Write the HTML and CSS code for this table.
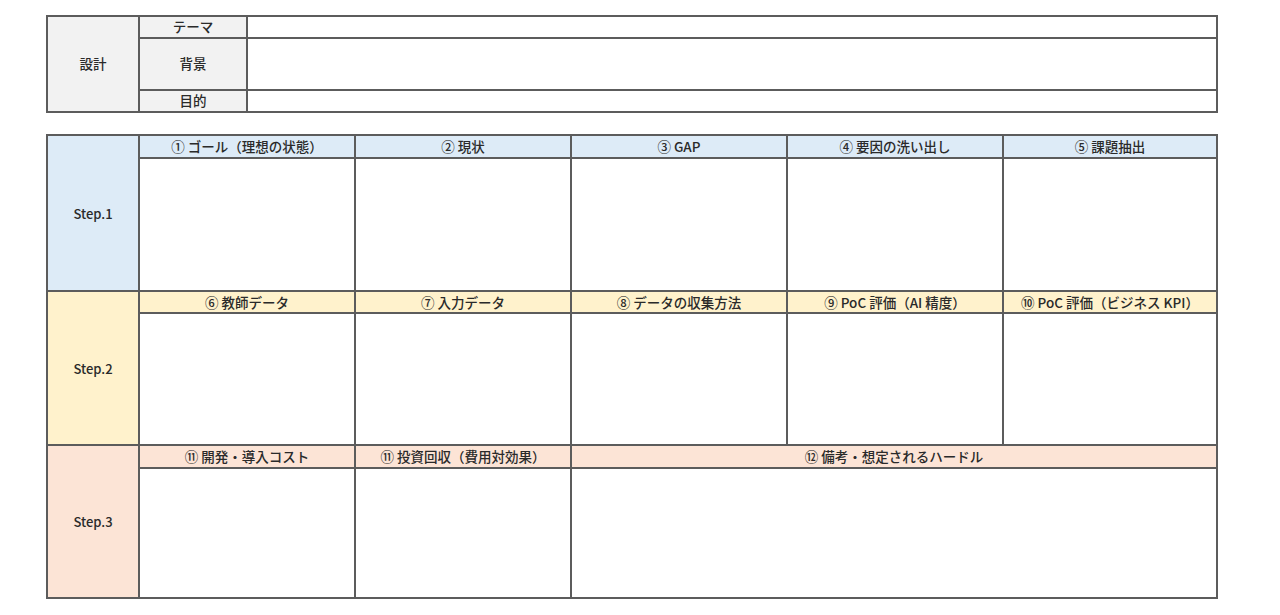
FILE: index.html
```html
<!DOCTYPE html>
<html lang="ja">
<head>
<meta charset="utf-8">
<link rel="stylesheet" href="styles.css">
</head>
<body>
<div class="page">
  <div class="design">
    <div class="cell label design-title">設計</div>
    <div class="cell label">テーマ</div>
    <div class="cell blank"></div>
    <div class="cell label">背景</div>
    <div class="cell blank"></div>
    <div class="cell label">目的</div>
    <div class="cell blank"></div>
  </div>

  <div class="canvas">
    <div class="cell step s1 r1">Step.1</div>
    <div class="cell head s1">①&nbsp;ゴール（理想の状態）</div>
    <div class="cell head s1">②&nbsp;現状</div>
    <div class="cell head s1">③&nbsp;GAP</div>
    <div class="cell head s1">④&nbsp;要因の洗い出し</div>
    <div class="cell head s1">⑤&nbsp;課題抽出</div>
    <div class="cell body"></div>
    <div class="cell body"></div>
    <div class="cell body"></div>
    <div class="cell body"></div>
    <div class="cell body"></div>

    <div class="cell step s2 r2">Step.2</div>
    <div class="cell head s2">⑥&nbsp;教師データ</div>
    <div class="cell head s2">⑦&nbsp;入力データ</div>
    <div class="cell head s2">⑧&nbsp;データの収集方法</div>
    <div class="cell head s2">⑨&nbsp;PoC 評価（AI 精度）</div>
    <div class="cell head s2">⑩&nbsp;PoC 評価（ビジネス KPI）</div>
    <div class="cell body"></div>
    <div class="cell body"></div>
    <div class="cell body"></div>
    <div class="cell body"></div>
    <div class="cell body"></div>

    <div class="cell step s3 r3">Step.3</div>
    <div class="cell head s3">⑪&nbsp;開発・導入コスト</div>
    <div class="cell head s3">⑪&nbsp;投資回収（費用対効果）</div>
    <div class="cell head s3 wide">⑫&nbsp;備考・想定されるハードル</div>
    <div class="cell body"></div>
    <div class="cell body"></div>
    <div class="cell body wide"></div>
  </div>
</div>
</body>
</html>
```

FILE: styles.css
```css
* { box-sizing: border-box; }
html, body { margin: 0; padding: 0; background: #ffffff; }
body {
  font-family: "Noto Sans CJK JP", "Noto Sans", sans-serif;
  color: #2a2a2a;
  font-size: 13.5px;
  font-weight: 500;
}
.page {
  padding: 15px 0 0 46px;
  width: 1280px;
  height: 615px;
}
.cell {
  display: flex;
  align-items: center;
  justify-content: center;
  background: #ffffff;
  line-height: 1;
  white-space: nowrap;
}
.design {
  display: grid;
  grid-template-columns: 90px 106px 968px;
  grid-template-rows: 20px 50px 20px;
  gap: 2px;
  background: #5c5c5c;
  border: 2px solid #5c5c5c;
  width: 1172px;
}
.design .label { background: #f2f2f2; }
.design-title { grid-row: 1 / 4; }

.canvas {
  margin-top: 21px;
  display: grid;
  grid-template-columns: 90px 214px 214px 214px 214px 212px;
  grid-template-rows: 21px 131px 20px 130px 21px 128px;
  gap: 2px;
  background: #5c5c5c;
  border: 2px solid #5c5c5c;
  width: 1172px;
}
.step { font-weight: 500; font-size: 13px; }
.r1 { grid-row: 1 / 3; }
.r2 { grid-row: 3 / 5; }
.r3 { grid-row: 5 / 7; }
.s1 { background: #ddebf7; }
.s2 { background: #fff2cc; }
.s3 { background: #fce4d6; }
.head { padding-top: 1px; }
.wide { grid-column: 4 / 7; }
```
